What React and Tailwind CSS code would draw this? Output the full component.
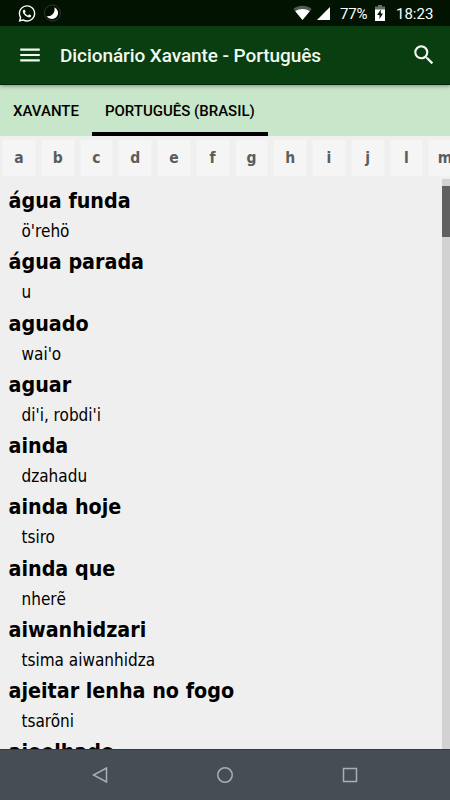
import { useState } from 'react';
import { FaWhatsapp } from 'react-icons/fa';
import { MdMenu, MdSearch } from 'react-icons/md';

const TABS = ['XAVANTE', 'PORTUGUÊS (BRASIL)'];

const LETTERS = ['a', 'b', 'c', 'd', 'e', 'f', 'g', 'h', 'i', 'j', 'l', 'm'];

const ENTRIES = [
  { word: 'água funda', translation: "ö'rehö" },
  { word: 'água parada', translation: 'u' },
  { word: 'aguado', translation: "wai'o" },
  { word: 'aguar', translation: "di'i, robdi'i" },
  { word: 'ainda', translation: 'dzahadu' },
  { word: 'ainda hoje', translation: 'tsiro' },
  { word: 'ainda que', translation: 'nherẽ' },
  { word: 'aiwanhidzari', translation: 'tsima aiwanhidza' },
  { word: 'ajeitar lenha no fogo', translation: 'tsarõni' },
  { word: 'ajoelhado', translation: '' },
];

function StatusBar() {
  return (
    <div className="flex h-[26px] shrink-0 items-center bg-[#021302] pl-[18px] pr-[17px] text-white">
      <FaWhatsapp className="h-[19px] w-[18px]" />
      <svg className="ml-2 h-[18px] w-[18px]" viewBox="0 0 18 18">
        <circle cx="8.500" cy="9" r="8" fill="#020d02" stroke="#3b463b" strokeWidth="0.8" />
        <path d="M10.300 3.200a6.200 6.200 0 1 1-7.800 8.800c5 1.200 9.200-3.500 7.800-8.800z" fill="#fff" />
      </svg>
      <div className="flex-1" />
      <svg className="h-4 w-[19px]" viewBox="0 0 19 16">
        <path d="M0.300 4C5.800-0.300 13.200-0.300 18.700 4L9.500 15z" fill="#4f5c4f" />
        <path d="M2.300 6.300C6.500 3.200 12.500 3.200 16.700 6.300L9.500 15z" fill="#fff" />
      </svg>
      <svg className="ml-[5px] h-[13px] w-[13px]" viewBox="0 0 13 13">
        <path d="M13 0v13H0z" fill="#fff" />
      </svg>
      <span className="ml-[10px] w-[28px] whitespace-nowrap pt-[2px] text-[15px] leading-none tracking-[-0.200px]">77%</span>
      <svg className="ml-[7px] h-4 w-[10px]" viewBox="0 0 10 16">
        <path d="M3 0h4v1.500h3V5H0V1.500h3z" fill="#647064" />
        <path d="M0 4.500h10V16H0z" fill="#fff" />
        <path d="M5.800 4.500 2 10h2.500v4L8 8.600H5.800z" fill="#021302" />
      </svg>
      <span className="ml-[11px] w-[37px] whitespace-nowrap pt-[2px] text-[15px] leading-none">18:23</span>
    </div>
  );
}

function AppBar() {
  return (
    <header className="relative z-10 flex h-[59px] shrink-0 items-center border-b border-[#03240a] bg-[#083e10] pl-[17px] pr-[13px] text-[#f2f8f0] shadow-[0_1px_4px_rgba(0,0,0,0.4)]">
      <button aria-label="Menu">
        <MdMenu className="h-[26px] w-[26px]" />
      </button>
      <h1 className="ml-[17px] flex-1 whitespace-nowrap pt-[2px] text-[19px] font-medium tracking-[-0.080px]">
        Dicionário Xavante - Português
      </h1>
      <button aria-label="Buscar">
        <MdSearch className="h-[26px] w-[26px]" />
      </button>
    </header>
  );
}

function NavBar() {
  return (
    <nav className="flex h-[51px] shrink-0 items-center justify-center gap-[109px] border-t border-[#343a41] bg-[#464d54]">
      <svg className="h-4 w-4" viewBox="0 0 16 16" fill="none" stroke="#a9b0b5" strokeWidth="1.500">
        <path d="M14.500 1v14L1.500 8z" />
      </svg>
      <svg className="h-4 w-4" viewBox="0 0 16 16" fill="none" stroke="#a9b0b5" strokeWidth="1.500">
        <circle cx="8" cy="8" r="7.250" />
      </svg>
      <svg className="h-4 w-4" viewBox="0 0 16 16" fill="none" stroke="#a9b0b5" strokeWidth="1.500">
        <path d="M1.500 1.500h13v13h-13z" />
      </svg>
    </nav>
  );
}

export default function App() {
  const [tab, setTab] = useState(TABS[1]);

  return (
    <div className="flex h-[800px] w-[450px] flex-col overflow-hidden bg-[#efefef] font-[Roboto,sans-serif]">
      <StatusBar />
      <AppBar />

      <div className="flex h-[51px] shrink-0 bg-[#c8e6c9]">
        {TABS.map((t) => (
          <button
            key={t}
            onClick={() => setTab(t)}
            className={`whitespace-nowrap border-b-4 px-[13px] pt-[6px] text-[15px] font-medium text-black ${
              t === tab ? 'border-black' : 'border-transparent'
            }`}
          >
            {t}
          </button>
        ))}
      </div>

      {/* Letter index */}
      <div className="flex h-[43px] shrink-0 gap-[5px] overflow-hidden pl-[2px] pt-[3px]">
        {LETTERS.map((l) => (
          <button
            key={l}
            className="h-[38px] w-[33.750px] shrink-0 border border-[#f1f1f1] bg-[#f5f5f5] pt-[2px] font-['DejaVu_Sans_Condensed','DejaVu_Sans',sans-serif] text-[15.500px] font-bold text-[#5c5c5c] [font-stretch:condensed]"
          >
            {l}
          </button>
        ))}
      </div>

      <main className="flex min-h-0 flex-1">
        <dl className="min-w-0 flex-1 overflow-hidden pl-[8.500px] pt-[6px] font-['DejaVu_Sans_Condensed','DejaVu_Sans',sans-serif] text-black [font-stretch:condensed]">
          {ENTRIES.map((e) => (
            <div key={e.word} className="h-[61.250px] whitespace-nowrap">
              <dt className="h-[31px] text-[21.300px] font-bold leading-[31px]">{e.word}</dt>
              <dd className="pl-[13px] text-[17px] leading-[30px]">{e.translation}</dd>
            </div>
          ))}
        </dl>
        <div className="w-2 bg-[#d2d2d2] pt-[7px]">
          <div className="h-[51px] bg-[#606060]" />
        </div>
      </main>

      <NavBar />
    </div>
  );
}
